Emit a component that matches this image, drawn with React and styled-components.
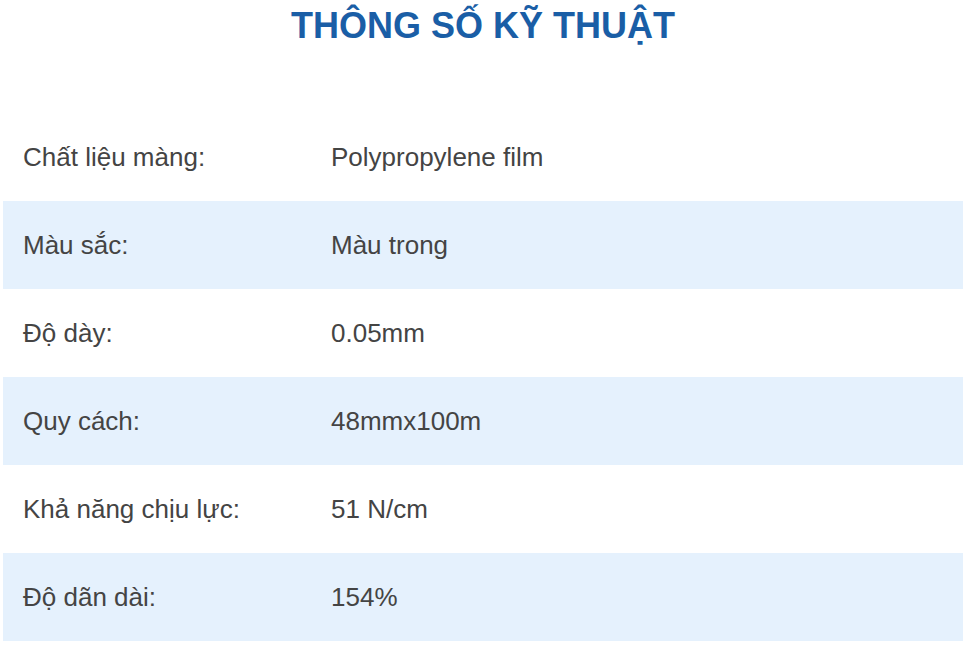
import React from "react";
import styled, { createGlobalStyle } from "styled-components";

const specs = [
    { label: "Chất liệu màng:", value: "Polypropylene film" },
    { label: "Màu sắc:", value: "Màu trong" },
    { label: "Độ dày:", value: "0.05mm" },
    { label: "Quy cách:", value: "48mmx100m" },
    { label: "Khả năng chịu lực:", value: "51 N/cm" },
    { label: "Độ dãn dài:", value: "154%" },
];

const App = () => {
    return (
        <>
            <GlobalStyle />
            <Section>
                <Title>THÔNG SỐ KỸ THUẬT</Title>
                <SpecTable>
                    <tbody>
                        {specs.map((spec, i) => (
                            <Row key={spec.label} shaded={i % 2 === 1}>
                                <LabelCell>{spec.label}</LabelCell>
                                <ValueCell>{spec.value}</ValueCell>
                            </Row>
                        ))}
                    </tbody>
                </SpecTable>
            </Section>
        </>
    );
};

const GlobalStyle = createGlobalStyle`
    body {
        margin: 0;
        background: #ffffff;
        font-family: "Liberation Sans", Arial, sans-serif;
    }
`;

const Section = styled.div`
    width: 960px;
    margin-left: 3px;
`;

const Title = styled.h2`
    margin: 0;
    padding-top: 5px;
    height: 113px;
    box-sizing: border-box;
    text-align: center;
    font-size: 36px;
    font-weight: bold;
    line-height: 42px;
    color: #1a5ea6;
`;

const SpecTable = styled.table`
    width: 100%;
    border-collapse: collapse;
`;

const Row = styled.tr.withConfig({ shouldForwardProp: (p) => p !== "shaded" })`
    height: 88px;
    background: ${(props) => (props.shaded ? "#e5f1fd" : "transparent")};
`;

const Cell = styled.td`
    padding: 0 20px;
    font-size: 26px;
    color: #444444;
    vertical-align: middle;
`;

const LabelCell = styled(Cell)`
    width: 268px;
`;

const ValueCell = styled(Cell)``;

export default App;
